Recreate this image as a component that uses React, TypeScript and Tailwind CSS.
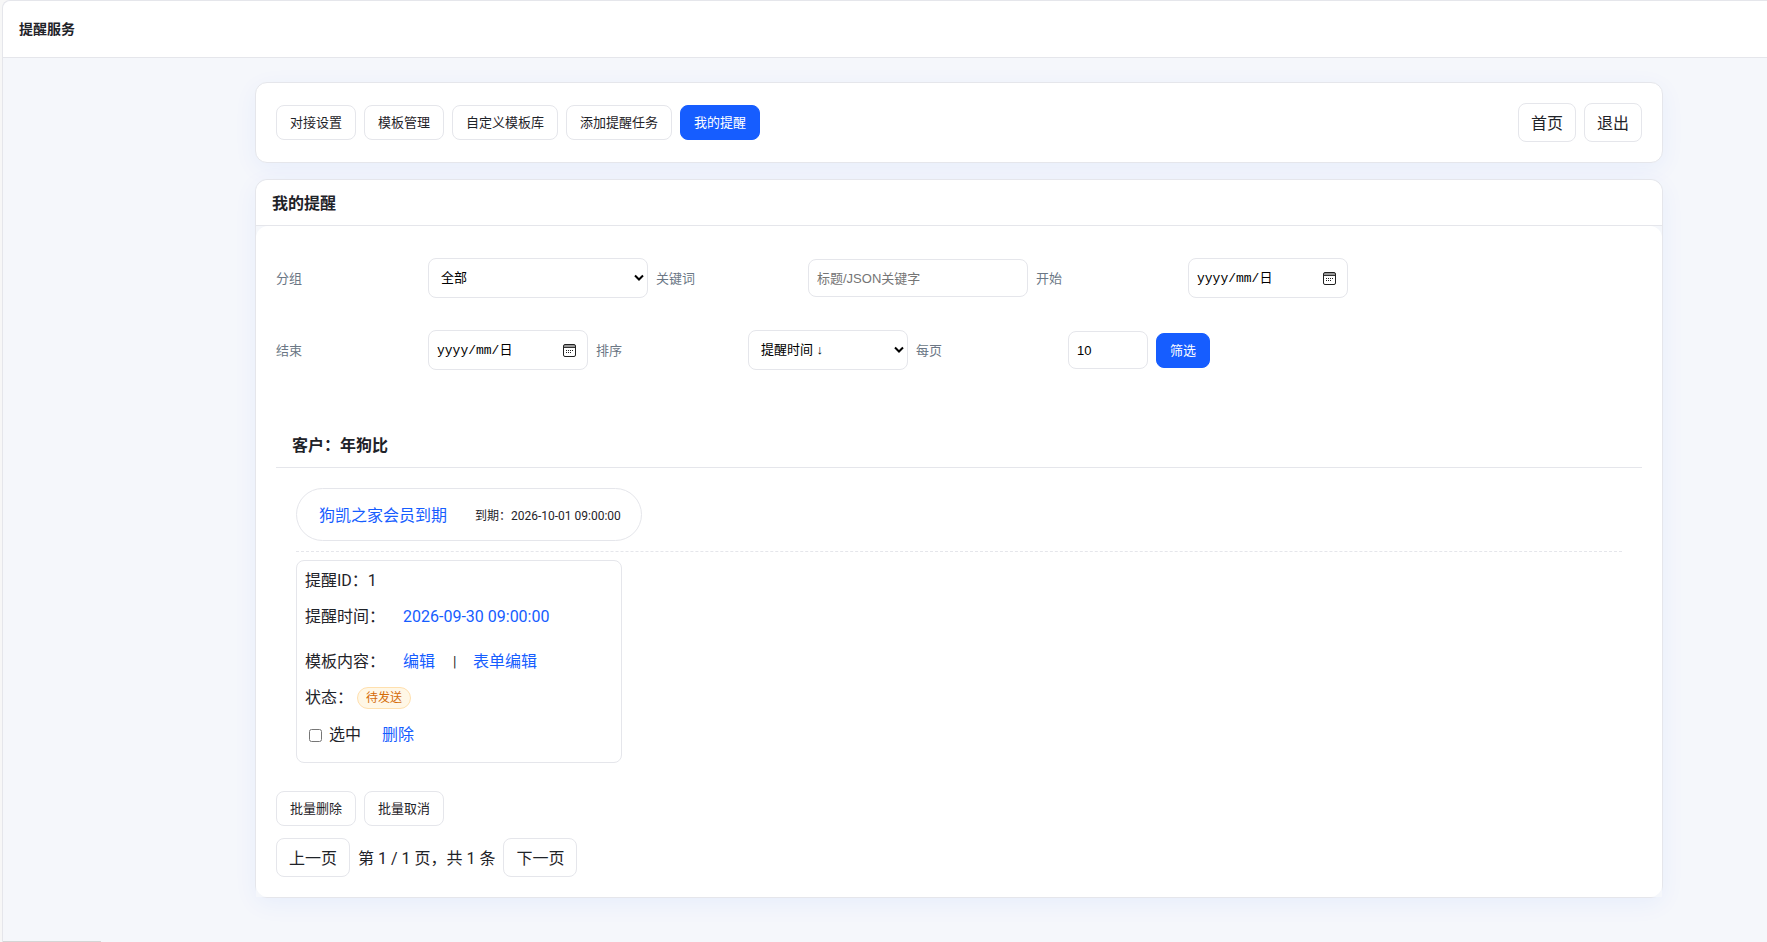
import { useState } from "react";
import type { ReactNode } from "react";

const tabs = ["对接设置", "模板管理", "自定义模板库", "添加提醒任务", "我的提醒"];

const smallBtn = "rounded-lg border border-[#e5e6eb] bg-white px-[13px] py-2 text-[13px] leading-[17px] text-[#1f2329]";
const bigBtn = "rounded-lg border border-[#e5e6eb] bg-white px-3 pb-[7px] pt-[9px] text-base leading-[21px] text-[#1f2329]";
const primaryBtn = "rounded-lg border border-[#165dff] bg-[#165dff] px-[13px] py-2 text-[13px] leading-[17px] text-white";
const card = "border border-[#e5e6eb] shadow-[0_6px_24px_rgba(22,93,255,0.06)]";
const heading = "border-b border-[#e5e6eb] px-4 pb-[11px] pt-[13px] font-bold leading-[21px]";
const control = "rounded-lg border border-[#e5e6eb] bg-white text-[13px] text-black font-['Liberation_Sans','Noto_Sans_CJK_SC',sans-serif]";
const link = "text-[#165dff]";

const Field = ({ id, label, children }: { id: string; label: string; children: ReactNode }) => (
    <div className="flex items-center gap-2">
        <label htmlFor={id} className="w-36 pt-0.5 text-[13px] text-[#6b7785]">{label}</label>
        {children}
    </div>
);

const CalendarIcon = () => (
    <svg width="13" height="13" viewBox="0 0 13 13" fill="none">
        <path d="M1 1h11v3H1z" fill="#999" />
        <rect x="0.5" y="0.5" width="12" height="12" rx="1.5" stroke="#222" />
        <path d="M1 3.5h11" stroke="#333" />
        <path d="M5 6.5h1M7 6.5h1M9 6.5h1M3 8.5h1M5 8.5h1M7 8.5h1M3 6.5h1" stroke="#222" />
    </svg>
);

const DateField = ({ id, label }: { id: string; label: string }) => (
    <Field id={id} label={label}>
        <div className="relative">
            <input
                id={id}
                type="text"
                placeholder="yyyy/mm/日"
                className="block h-10 w-40 rounded-lg border border-[#e5e6eb] bg-white pl-2 pr-8 font-['Liberation_Mono','Noto_Sans_CJK_SC',monospace] text-[13px] placeholder:text-black"
            />
            <button type="button" aria-label={label} className="absolute right-3 top-3.5">
                <CalendarIcon />
            </button>
        </div>
    </Field>
);

const SelectField = ({ id, label, width, options }: { id: string; label: string; width: string; options: string[] }) => (
    <Field id={id} label={label}>
        <div className="relative">
            <select id={id} className={`${control} ${width} block h-10 appearance-none pl-3 pr-6`}>
                {options.map((o) => <option key={o}>{o}</option>)}
            </select>
            <svg className="pointer-events-none absolute right-1 top-4" width="10" height="8" viewBox="0 0 10 8" fill="none" stroke="#000" strokeWidth="2">
                <path d="M1 1.5l4 4 4-4" />
            </svg>
        </div>
    </Field>
);

const App = () => {
    const [active, setActive] = useState("我的提醒");
    const [checked, setChecked] = useState(false);

    return (
        <div className="min-h-screen bg-[#f7f7f7] pl-0.5 font-[Roboto,'Noto_Sans_CJK_SC',sans-serif] text-base text-[#1f2329]">
            <div className="min-h-screen rounded-tl-lg border-l border-t border-[#e5e6eb] bg-[#f5f7fb]">
                <header className="flex h-[57px] items-center rounded-tl-lg border-b border-[#e5e6eb] bg-white px-4">
                    <h1 className="text-sm font-bold">提醒服务</h1>
                </header>

                <main className="flex flex-col gap-4 pb-11 pl-[252px] pr-[104px] pt-6">
                    <nav className={`${card} flex items-center justify-between rounded-xl bg-white p-5`}>
                        <div className="flex gap-2">
                            {tabs.map((tab) => (
                                <button
                                    key={tab}
                                    onClick={() => setActive(tab)}
                                    className={tab === active ? primaryBtn : smallBtn}
                                >
                                    {tab}
                                </button>
                            ))}
                        </div>
                        <div className="flex gap-2">
                            <a href="#" className={bigBtn}>首页</a>
                            <a href="#" className={bigBtn}>退出</a>
                        </div>
                    </nav>

                    <section className={`${card} rounded-xl bg-[#f5f7fb]`}>
                        <h2 className={`${heading} rounded-t-xl bg-white`}>我的提醒</h2>

                        <div className="bg-[#f5f7fb]">
                            <div className="rounded-xl bg-white p-5">
                                <form onSubmit={(e) => e.preventDefault()} className="flex flex-wrap items-center gap-x-2 gap-y-8 py-3">
                                    <SelectField id="group" label="分组" width="w-[220px]" options={["全部"]} />
                                    <Field id="keyword" label="关键词">
                                        <input id="keyword" type="text" placeholder="标题/JSON关键字" className={`${control} h-[38px] w-[220px] px-2 placeholder:text-[#757575]`} />
                                    </Field>
                                    <DateField id="start" label="开始" />
                                    <DateField id="end" label="结束" />
                                    <SelectField id="sort" label="排序" width="w-40" options={["提醒时间 ↓", "提醒时间 ↑"]} />
                                    <Field id="size" label="每页">
                                        <input id="size" type="text" defaultValue="10" className={`${control} h-[38px] w-20 px-2`} />
                                    </Field>
                                    <button type="submit" className={primaryBtn}>筛选</button>
                                </form>

                                <h3 className={`${heading} mt-10`}>客户：年狗比</h3>

                                <div className="px-5 pt-5">
                                    <div className="border-b border-dashed border-[#e5e6eb] pb-2.5">
                                        <div className="inline-flex h-[53px] items-center gap-7 rounded-full border border-[#e5e6eb] pl-[22px] pr-5 pt-0.5 align-top">
                                            <a href="#" className={link}>狗凯之家会员到期</a>
                                            <span className="text-xs">到期：2026-10-01 09:00:00</span>
                                        </div>
                                    </div>

                                    <div className="mt-2 w-[326px] rounded-lg border border-[#e5e6eb] px-2 pb-[15px] pt-2">
                                        <p className="leading-6">提醒ID：1</p>
                                        <p className="mt-3 flex gap-[18px] leading-6">
                                            <span>提醒时间：</span>
                                            <a href="#" className={link}>2026-09-30 09:00:00</a>
                                        </p>
                                        <p className="mt-[21px] flex gap-[18px] leading-6">
                                            <span>模板内容：</span>
                                            <a href="#" className={link}>编辑</a>
                                            <span className="w-0.5 text-sm leading-6">|</span>
                                            <a href="#" className={link}>表单编辑</a>
                                        </p>
                                        <p className="mt-3 flex items-center gap-1 leading-6">
                                            <span>状态：</span>
                                            <span className="rounded-full border border-[#ffe0ae] bg-[#fff7e6] px-2 text-xs leading-5 text-[#d46b08]">待发送</span>
                                        </p>
                                        <div className="mt-[13px] flex items-center gap-[21px] leading-6">
                                            <label className="flex items-center gap-[7px] pl-1">
                                                <input type="checkbox" checked={checked} onChange={(e) => setChecked(e.target.checked)} className="size-[13px]" />
                                                选中
                                            </label>
                                            <a href="#" className={link}>删除</a>
                                        </div>
                                    </div>
                                </div>

                                <div className="mt-7 flex gap-2">
                                    <button className={smallBtn}>批量删除</button>
                                    <button className={smallBtn}>批量取消</button>
                                </div>

                                <div className="mt-3 flex items-center gap-2">
                                    <a href="#" className={bigBtn}>上一页</a>
                                    <span className="pt-0.5">第 1 / 1 页，共 1 条</span>
                                    <a href="#" className={bigBtn}>下一页</a>
                                </div>
                            </div>
                        </div>
                    </section>
                </main>
            </div>

            <div className="fixed bottom-0 left-[3px] h-px w-[98px] bg-[#d5d5d5]" />
        </div>
    );
};

export default App;
